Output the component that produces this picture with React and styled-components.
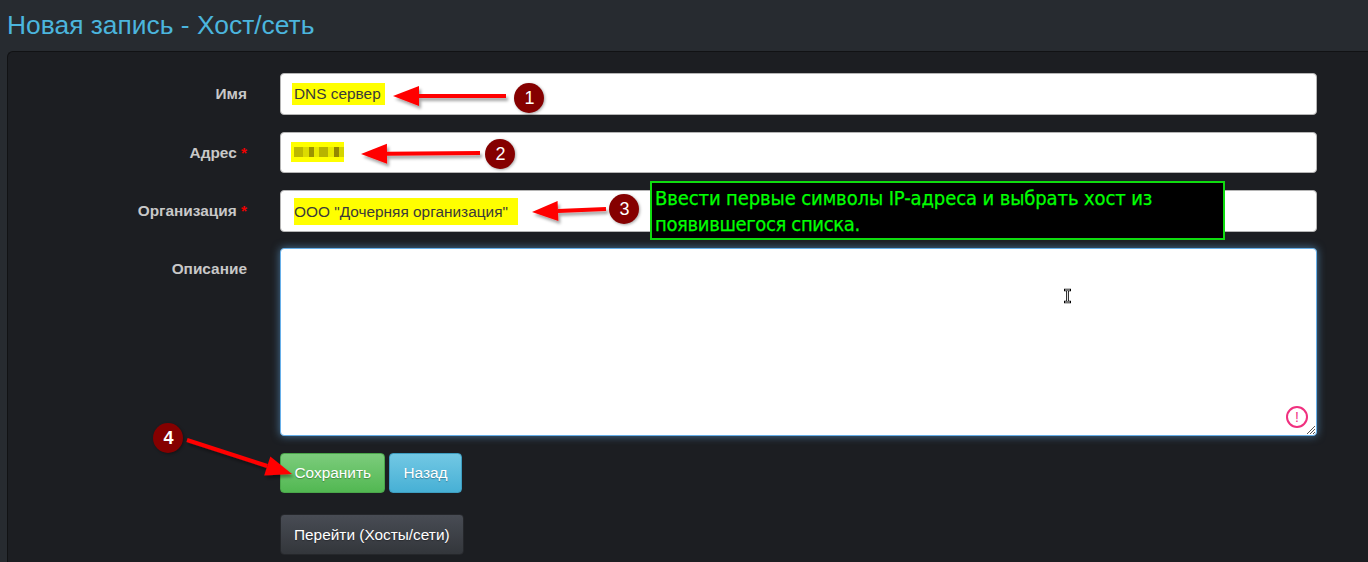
import React from "react";
import styled, { createGlobalStyle } from "styled-components";

const Global = createGlobalStyle`
  html, body {
    margin: 0;
    height: 562px;
    overflow: hidden;
    background: #272b30;
    font-family: "Liberation Sans", Arial, sans-serif;
  }
`;

const Page = styled.div`
  position: relative;
  width: 1368px;
  height: 562px;
  overflow: hidden;
  padding-left: 7px;
  box-sizing: border-box;
`;

const Title = styled.h1`
  margin: 0;
  height: 51px;
  line-height: 51px;
  font-size: 26.4px;
  font-weight: 400;
  color: #4bb5dd;
`;

const Panel = styled.div`
  height: 520px;
  background: #1c1e22;
  border: 1px solid #111214;
  border-right: 0;
  border-radius: 6px 0 0 0;
  box-sizing: border-box;
  padding: 21px 51px 0 0;
`;

const Row = styled.div`
  display: grid;
  grid-template-columns: 239px 1fr;
  column-gap: 33px;
  margin-bottom: ${({ $gap }) => $gap}px;
`;

const Label = styled.label`
  padding-top: 11px;
  text-align: right;
  font-size: 15.4px;
  line-height: 20px;
  font-weight: 700;
  color: #c8c8c8;
`;

const Required = styled.span`
  color: #ee0000;
`;

const Field = styled.div`
  height: ${({ $h }) => $h}px;
  background: #fff;
  border: 1px solid #b5b5b5;
  border-radius: 4px;
  box-sizing: border-box;
  padding-left: 11px;
  display: flex;
  align-items: center;
`;

const Mark = styled.span`
  background: #ffff00;
  color: #3a3a3a;
  font-size: 15.4px;
  line-height: ${({ $h }) => $h}px;
  margin-left: ${({ $l }) => 2 - $l}px;
  padding: 0 ${({ $r }) => $r}px 0 ${({ $l }) => $l}px;
`;

const Blur = styled.span`
  display: flex;
  align-items: center;
  width: 53px;
  height: 20px;
  background: #ffff00;
  margin: -2px 0 0 -1px;
  padding-left: 3px;
  box-sizing: border-box;
`;

const BlurCell = styled.i`
  display: block;
  width: ${({ $w }) => $w}px;
  height: 10px;
  background: ${({ $c }) => $c};
`;

const TextArea = styled.div`
  position: relative;
  height: 188px;
  background: #fff;
  border: 1px solid #66afe9;
  border-radius: 4px;
  box-sizing: border-box;
  box-shadow: 0 0 8px rgba(102, 175, 233, 0.6);
`;

const Grip = styled.svg`
  position: absolute;
  right: 0;
  bottom: 0;
`;

const Alert = styled.span`
  position: absolute;
  right: 8px;
  bottom: 7px;
  width: 22px;
  height: 22px;
  box-sizing: border-box;
  border: 2px solid #f0307f;
  border-radius: 50%;
  background: #fff;
  color: #f0307f;
  font-size: 14px;
  line-height: 18px;
  text-align: center;
`;

const Actions = styled.div`
  margin-left: 272px;
  display: flex;
  gap: 4px;
  margin-top: ${({ $top }) => $top}px;
`;

const kinds = {
  green: { border: "#4aa64a", bg: "linear-gradient(#7ccc7c, #52b852)" },
  blue: { border: "#3d9dc0", bg: "linear-gradient(#72c8e4, #47b0d5)" },
  dark: { border: "#25272b", bg: "linear-gradient(#484c54, #33363b)" },
};

const Button = styled.button`
  height: ${({ $h }) => $h || 40}px;
  padding: 0 ${({ $px }) => $px || 13}px;
  font: 400 15.4px "Liberation Sans", Arial, sans-serif;
  color: #fff;
  border-radius: 4px;
  border: 1px solid ${({ $kind }) => kinds[$kind].border};
  background: ${({ $kind }) => kinds[$kind].bg};
  text-shadow: 0 1px 1px rgba(0, 0, 0, 0.3);
`;

const Badge = styled.span`
  position: absolute;
  left: ${({ $x }) => $x}px;
  top: ${({ $y }) => $y}px;
  width: 30px;
  height: 30px;
  padding-left: 1px;
  box-sizing: border-box;
  border-radius: 50%;
  background: #850000;
  color: #fff;
  font-size: 18px;
  font-weight: ${({ $bold }) => ($bold ? 700 : 400)};
  line-height: 30px;
  text-align: center;
  box-shadow: 1px 1px 3px rgba(0, 0, 0, 0.35);
`;

const Note = styled.div`
  position: absolute;
  left: 650px;
  top: 181px;
  width: 575px;
  height: 59px;
  box-sizing: border-box;
  background: #000;
  border: 2px solid #0fdc0f;
  padding: 2px 3px;
  color: #00ff00;
  font-family: "DejaVu Sans Condensed", "DejaVu Sans", sans-serif;
  font-size: 20px;
  line-height: 26px;
  -webkit-text-stroke: 0.25px #00ff00;
`;

const NoteLine = styled.div`
  letter-spacing: ${({ $tight }) => $tight}px;
`;

const Overlay = styled.svg`
  position: absolute;
  left: 0;
  top: 0;
  pointer-events: none;
`;

// x1,y1 tail -> x2,y2 tip
function Arrow({ x1, y1, x2, y2 }) {
  const a = Math.atan2(y2 - y1, x2 - x1);
  const len = 26;
  const w = 10;
  const bx = x2 - Math.cos(a) * len;
  const by = y2 - Math.sin(a) * len;
  const nx = -Math.sin(a);
  const ny = Math.cos(a);
  const head = `${x2},${y2} ${bx + nx * w},${by + ny * w} ${bx - nx * w},${by - ny * w}`;
  return (
    <g filter="url(#arrowShadow)">
      <line x1={x1} y1={y1} x2={bx} y2={by} stroke="#f00" strokeWidth="4" />
      <polygon points={head} fill="#f00" />
    </g>
  );
}

export default function App() {
  return (
    <Page>
      <Global />
      <Title>Новая запись - Хост/сеть</Title>
      <Panel>
        <Row $gap={17}>
          <Label>Имя</Label>
          <Field $h={42}><Mark $h={22} $l={2} $r={4}>DNS сервер</Mark></Field>
        </Row>
        <Row $gap={17}>
          <Label>Адрес <Required>*</Required></Label>
          <Field $h={41}>
            <Blur>
              <BlurCell $w={9} $c="#bdb900" />
              <BlurCell $w={6} $c="#dcdc00" />
              <BlurCell $w={5} $c="#9c9400" />
              <BlurCell $w={5} $c="#e8e800" />
              <BlurCell $w={9} $c="#b8b400" />
              <BlurCell $w={6} $c="#e8e800" />
              <BlurCell $w={5} $c="#948800" />
              <BlurCell $w={5} $c="#d4d400" />
            </Blur>
          </Field>
        </Row>
        <Row $gap={16}>
          <Label>Организация <Required>*</Required></Label>
          <Field $h={42}><Mark $h={27} $l={0} $r={10}>ООО "Дочерняя организация"</Mark></Field>
        </Row>
        <Row $gap={17}>
          <Label>Описание</Label>
          <TextArea>
            <Alert>!</Alert>
            <Grip width="10" height="10" viewBox="0 0 10 10">
              <path d="M1 9 L9 1 M4 9 L9 4 M7 9 L9 7" stroke="#555" strokeWidth="1" />
            </Grip>
          </TextArea>
        </Row>
        <Actions $top={0}>
          <Button $kind="green" $px={13.5}>Сохранить</Button>
          <Button $kind="blue">Назад</Button>
        </Actions>
        <Actions $top={21}>
          <Button $kind="dark" $h={41}>Перейти (Хосты/сети)</Button>
        </Actions>
      </Panel>

      <Note>
        <NoteLine $tight={-0.1}>Ввести первые символы IP-адреса и выбрать хост из</NoteLine>
        <NoteLine $tight={-0.35}>появившегося списка.</NoteLine>
      </Note>

      <Overlay width="1368" height="562">
        <defs>
          <filter id="arrowShadow" x="-20%" y="-50%" width="140%" height="220%">
            <feDropShadow dx="2" dy="3" stdDeviation="1.5" floodColor="#000" floodOpacity="0.35" />
          </filter>
        </defs>
        <Arrow x1={506} y1={96} x2={393} y2={96} />
        <Arrow x1={480} y1={153} x2={361} y2={154} />
        <Arrow x1={606} y1={209} x2={532} y2={212} />
        <Arrow x1={187} y1={440} x2={292} y2={474} />
        <path d="M1064 290h7M1067.5 290v12M1064 302h7" stroke="#000" strokeWidth="2.6" fill="none" />
        <path d="M1065 290h5M1067.5 291v10M1065 302h5" stroke="#fff" strokeWidth="0.9" fill="none" />
      </Overlay>

      <Badge $x={514} $y={83}>1</Badge>
      <Badge $x={485} $y={139}>2</Badge>
      <Badge $x={609} $y={194}>3</Badge>
      <Badge $x={153} $y={423} $bold>4</Badge>
    </Page>
  );
}
